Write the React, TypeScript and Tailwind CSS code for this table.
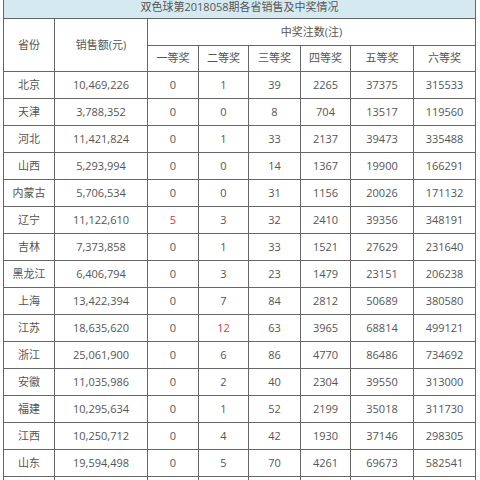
const rows: string[][] = [
  ['北京', '10,469,226', '0', '1', '39', '2265', '37375', '315533'],
  ['天津', '3,788,352', '0', '0', '8', '704', '13517', '119560'],
  ['河北', '11,421,824', '0', '1', '33', '2137', '39473', '335488'],
  ['山西', '5,293,994', '0', '0', '14', '1367', '19900', '166291'],
  ['内蒙古', '5,706,534', '0', '0', '31', '1156', '20026', '171132'],
  ['辽宁', '11,122,610', '5', '3', '32', '2410', '39356', '348191'],
  ['吉林', '7,373,858', '0', '1', '33', '1521', '27629', '231640'],
  ['黑龙江', '6,406,794', '0', '3', '23', '1479', '23151', '206238'],
  ['上海', '13,422,394', '0', '7', '84', '2812', '50689', '380580'],
  ['江苏', '18,635,620', '0', '12', '63', '3965', '68814', '499121'],
  ['浙江', '25,061,900', '0', '6', '86', '4770', '86486', '734692'],
  ['安徽', '11,035,986', '0', '2', '40', '2304', '39550', '313000'],
  ['福建', '10,295,634', '0', '1', '52', '2199', '35018', '311730'],
  ['江西', '10,250,712', '0', '4', '42', '1930', '37146', '298305'],
  ['山东', '19,594,498', '0', '5', '70', '4261', '69673', '582541'],
  // next row only shows its top border at the bottom edge
  ['', '', '', '', '', '', '', ''],
];

const prizes = ['一等奖', '二等奖', '三等奖', '四等奖', '五等奖', '六等奖'];
const widths = ['w-[51px]', 'w-[93px]', 'w-[51px]', 'w-[50px]', 'w-[52px]', 'w-[50px]', 'w-[63px]', 'w-[62px]'];

// red marks the winning counts that stand out in the source table
const isRed = (r: number, c: number) => (r === 5 && c === 2) || (r === 9 && c === 3);

export default function App() {
  return (
    <div
      className="h-[480px] w-[480px] overflow-hidden bg-white text-[11px] text-[#555]"
      style={{ fontFamily: '"Open Sans", "Noto Sans CJK SC", sans-serif' }}
    >
      <table className="-mt-[8px] ml-[3px] w-[473px] table-fixed border-collapse">
        <colgroup>
          {widths.map((w, i) => (
            <col key={i} className={w} />
          ))}
        </colgroup>
        <thead>
          <tr className="h-[26px]">
            <th colSpan={8} className="border border-[#666] bg-[#d5eaf0] pt-[4px] font-normal">
              双色球第2018058期各省销售及中奖情况
            </th>
          </tr>
          <tr className="h-[27px]">
            <th rowSpan={2} className="border border-[#666] font-normal">省份</th>
            <th rowSpan={2} className="border border-[#666] font-normal">销售额(元)</th>
            <th colSpan={6} className="border border-[#666] font-normal">中奖注数(注)</th>
          </tr>
          <tr className="h-[26px]">
            {prizes.map((p) => (
              <th key={p} className="border border-[#666] font-normal">{p}</th>
            ))}
          </tr>
        </thead>
        <tbody>
          {rows.map((row, r) => (
            <tr key={r} className="h-[27px]">
              {row.map((cell, c) => (
                <td
                  key={c}
                  className={`border border-[#666] text-center ${isRed(r, c) ? 'text-[#e0323a]' : ''}`}
                >
                  {cell}
                </td>
              ))}
            </tr>
          ))}
        </tbody>
      </table>
    </div>
  );
}
